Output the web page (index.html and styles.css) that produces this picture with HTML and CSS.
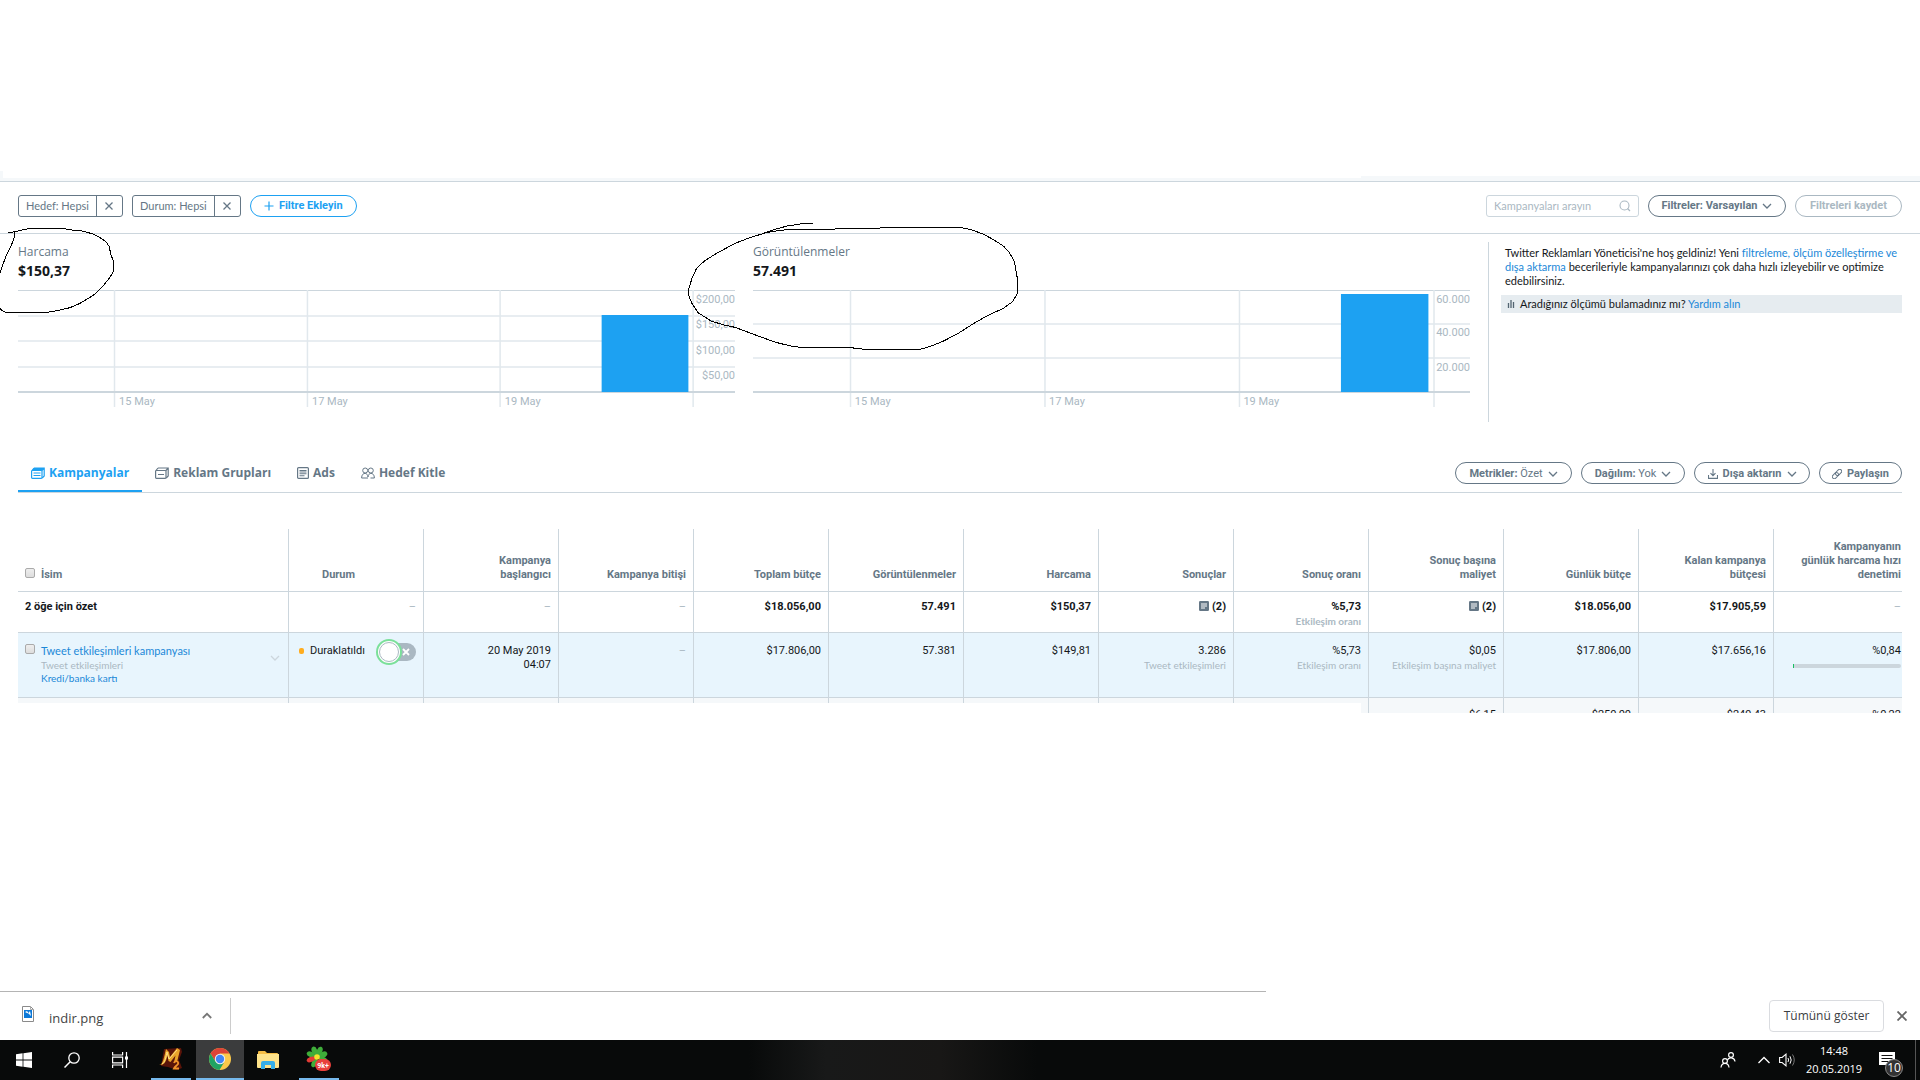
FILE: index.html
```html
<!DOCTYPE html>
<html lang="tr">
<head>
<meta charset="utf-8">
<title>Twitter Reklamları Yöneticisi</title>
<link rel="stylesheet" href="styles.css">
</head>
<body>
<svg class="defs" aria-hidden="true">
  <symbol id="chevron" viewBox="0 0 10 10"><path d="M1 3l4 4 4-4" fill="none" stroke="currentColor" stroke-width="1.3"/></symbol>
  <symbol id="cross" viewBox="0 0 10 10"><path d="M1.5 1.5l7 7M8.500 1.500l-7 7" fill="none" stroke="currentColor" stroke-width="1.300"/></symbol>
  <symbol id="stack" viewBox="0 0 14 12"><path d="M3 1h10.200v8l-2 2M13.200 1l-2.200 2.500M3 1L1 3.500" fill="none" stroke="currentColor" stroke-width="1.200"/><rect x=".6" y="3.500" width="10.400" height="7.800" rx=".8" fill="none" stroke="currentColor" stroke-width="1.200"/></symbol>
  <symbol id="note" viewBox="0 0 10 10"><rect width="10" height="10" rx="1.200" fill="#657786"/><path d="M2 3h6M2 5h6M2 7h4" stroke="#fff" stroke-width="1"/></symbol>
</svg>

<div class="page-top"><span class="top-nub"></span><span class="top-strip"></span></div>

<main>
  <form class="filter-bar">
    <div class="chip"><span class="chip-text">Hedef: Hepsi</span><button type="button" class="chip-x" aria-label="Hedef filtresini kaldır"><svg class="i10"><use href="#cross"/></svg></button></div>
    <div class="chip"><span class="chip-text">Durum: Hepsi</span><button type="button" class="chip-x" aria-label="Durum filtresini kaldır"><svg class="i10"><use href="#cross"/></svg></button></div>
    <button type="button" class="pill pill-add"><svg class="i10" viewBox="0 0 10 10"><path d="M5 .5v9M.5 5h9" stroke="currentColor" stroke-width="1.200"/></svg>Filtre Ekleyin</button>
    <div class="search">
      <input type="text" placeholder="Kampanyaları arayın" aria-label="Kampanyaları arayın">
      <svg class="i12" viewBox="0 0 12 12"><circle cx="5.500" cy="5.500" r="4.500" fill="none" stroke="#aab8c2" stroke-width="1.100"/><path d="M8.500 8.500L11 11" stroke="#aab8c2" stroke-width="1.200"/></svg>
    </div>
    <button type="button" class="pill pill-filters">Filtreler: Varsayılan<svg class="i10"><use href="#chevron"/></svg></button>
    <button type="button" class="pill pill-save" disabled>Filtreleri kaydet</button>
  </form>

  <section class="overview">
    <figure class="chart">
      <figcaption><span class="chart-name">Harcama</span><strong>$150,37</strong></figcaption>
      <svg class="plot" role="img" aria-label="Harcama grafiği">
        <g class="grid"><path class="ln" d="M0 .5h3000"/><path d="M0 26h3000M0 51h3000M0 77h3000"/></g>
        <g class="grid"><line x1="13.460%" x2="13.460%" y2="117"/><line x1="40.370%" x2="40.370%" y2="117"/><line x1="67.240%" x2="67.240%" y2="117"/><line x1="94.160%" x2="94.160%" y2="117"/></g>
        <path class="base" d="M0 102h3000"/>
        <rect class="bar" x="81.400%" y="25" width="12.100%" height="77"/>
        <g class="ylab"><text x="100%" y="13">$200,00</text><text x="100%" y="38">$150,00</text><text x="100%" y="64">$100,00</text><text x="100%" y="89">$50,00</text></g>
        <g class="xlab"><text x="14.100%" y="115">15 May</text><text x="41%" y="115">17 May</text><text x="67.900%" y="115">19 May</text></g>
      </svg>
      <svg class="ink ink-a" viewBox="0 198 345 264" preserveAspectRatio="none" aria-hidden="true"><path d="M25 216L40 216 80 207 120 205 185 205 215 210 245 213 280 222 300 233 318 245 328 260 332 282 341 306 341 332 330 352 310 377 285 402 262 417 240 430 210 443 180 450 148 456 130 458 20 458 8 453 0 445M44 216L42 235 33 258 20 283 10 310 0 338"/></svg>
    </figure>
    <figure class="chart">
      <figcaption><span class="chart-name">Görüntülenmeler</span><strong>57.491</strong></figcaption>
      <svg class="plot" role="img" aria-label="Görüntülenmeler grafiği">
        <g class="grid"><path class="ln" d="M0 .5h3000"/><path d="M0 34h3000M0 68h3000"/></g>
        <g class="grid"><line x1="13.600%" x2="13.600%" y2="117"/><line x1="40.720%" x2="40.720%" y2="117"/><line x1="67.850%" x2="67.850%" y2="117"/><line x1="94.980%" x2="94.980%" y2="117"/></g>
        <path class="base" d="M0 102h3000"/>
        <rect class="bar" x="82%" y="4" width="12.200%" height="98"/>
        <g class="ylab"><text x="100%" y="13">60.000</text><text x="100%" y="46">40.000</text><text x="100%" y="81">20.000</text></g>
        <g class="xlab"><text x="14.200%" y="115">15 May</text><text x="41.300%" y="115">17 May</text><text x="68.400%" y="115">19 May</text></g>
      </svg>
      <svg class="ink ink-b" viewBox="560 186 900 390" preserveAspectRatio="none" aria-hidden="true"><path d="M900 190L870 190 862 193 835 197 800 207 765 221 730 233 690 250 640 280 608 302 586 325 575 350 565 385 564 405 573 430 590 458 625 483 660 495 690 502 740 523 800 547 840 558 865 562 995 562 1040 568 1190 568 1215 560 1250 545 1290 522 1340 487 1370 468 1415 445 1440 425 1453 400 1452 350 1445 305 1430 275 1415 258 1390 240 1360 222 1325 208 1298 202 1125 203 920 208 830 209 800 213 762 220"/></svg>
    </figure>
    <aside class="welcome">
      <p>Twitter Reklamları Yöneticisi'ne hoş geldiniz! Yeni <a href="#">filtreleme, ölçüm özelleştirme ve dışa aktarma</a> becerileriyle kampanyalarınızı çok daha hızlı izleyebilir ve optimize edebilirsiniz.</p>
      <div class="help"><svg class="i8" viewBox="0 0 8 10"><path d="M1.500 4v5M4 1v8M6.500 3v6" stroke="#536471" stroke-width="1.300"/></svg><span>Aradığınız ölçümü bulamadınız mı? <a href="#">Yardım alın</a></span></div>
    </aside>
  </section>

  <div class="tab-row">
    <nav class="tabs">
      <a class="tab active" href="#"><svg class="i14" viewBox="0 0 14 12"><use href="#stack"/><path d="M3 1h10l-2 2.500H1z" fill="currentColor"/><path d="M2.500 6h7M2.500 8.500h7" stroke="currentColor"/></svg>Kampanyalar</a>
      <a class="tab" href="#"><svg class="i14" viewBox="0 0 14 12"><use href="#stack"/><path d="M3 7.500h6" stroke="currentColor"/></svg>Reklam Grupları</a>
      <a class="tab" href="#"><svg class="i12" viewBox="0 0 12 12"><rect x=".6" y=".6" width="10.800" height="10.800" rx="1" fill="none" stroke="currentColor" stroke-width="1.200"/><path d="M2.500 3.500h7M2.500 5h7M2.500 6.700h7M2.500 8.700h5" stroke="currentColor" stroke-width="1.100"/></svg>Ads</a>
      <a class="tab" href="#"><svg class="i14" viewBox="0 0 14 12"><g fill="none" stroke="currentColor" stroke-width="1"><circle cx="4.200" cy="3.500" r="2.500"/><circle cx="9.800" cy="3.500" r="2.500"/><path d="M.6 11c0-6 6.200-6 6.400-1 .2-5 6.400-5 6.400 1H9.500M.6 11H7"/></g></svg>Hedef Kitle</a>
    </nav>
    <div class="actions">
      <button type="button" class="pill w-met"><span>Metrikler: <span class="light">Özet</span></span><svg class="i10"><use href="#chevron"/></svg></button>
      <button type="button" class="pill w-dag"><span>Dağılım: <span class="light">Yok</span></span><svg class="i10"><use href="#chevron"/></svg></button>
      <button type="button" class="pill w-exp"><svg class="i10" viewBox="0 0 10 10"><path d="M5 0v6.500M2.500 4.200L5 6.700l2.500-2.500M.5 6v3.400h9V6" fill="none" stroke="currentColor" stroke-width="1.100"/></svg>Dışa aktarın<svg class="i10"><use href="#chevron"/></svg></button>
      <button type="button" class="pill w-share"><svg class="i10" viewBox="0 0 10 10"><g fill="none" stroke="currentColor" stroke-width="1" transform="rotate(-45 5 5)"><rect x="-.8" y="3" width="7" height="4" rx="2"/><rect x="3.800" y="3" width="7" height="4" rx="2"/></g></svg>Paylaşın</button>
    </div>
  </div>

  <div class="table-wrap">
  <table>
    <colgroup><col><col class="c" span="11"><col class="c-last"></colgroup>
    <thead>
      <tr><th class="name"><label class="check"><input type="checkbox">İsim</label></th><th class="mid">Durum</th><th>Kampanya<br>başlangıcı</th><th>Kampanya bitişi</th><th>Toplam bütçe</th><th>Görüntülenmeler</th><th>Harcama</th><th>Sonuçlar</th><th>Sonuç oranı</th><th>Sonuç başına<br>maliyet</th><th>Günlük bütçe</th><th>Kalan kampanya<br>bütçesi</th><th>Kampanyanın<br>günlük harcama hızı<br>denetimi</th></tr>
    </thead>
    <tbody>
      <tr class="sum"><td class="name">2 öğe için özet</td><td class="none">–</td><td class="none">–</td><td class="none">–</td><td>$18.056,00</td><td>57.491</td><td>$150,37</td><td><svg class="i10"><use href="#note"/></svg> (2)</td><td>%5,73<small>Etkileşim oranı</small></td><td><svg class="i10"><use href="#note"/></svg> (2)</td><td>$18.056,00</td><td>$17.905,59</td><td class="none">–</td></tr>
      <tr class="sel">
        <td class="name"><div class="campaign"><input type="checkbox" aria-label="Tweet etkileşimleri kampanyası"><div class="campaign-text"><a href="#">Tweet etkileşimleri kampanyası</a><small>Tweet etkileşimleri</small><a class="pay" href="#">Kredi/banka kartı</a></div><svg class="i10 more"><use href="#chevron"/></svg></div></td>
        <td class="status"><div class="status-in"><i class="dot"></i>Duraklatıldı<button type="button" class="toggle" aria-label="Kampanyayı etkinleştir"><span class="knob"></span><svg class="i8" viewBox="0 0 8 8"><path d="M1 1l6 6M7 1L1 7" stroke="#fff" stroke-width="1.800"/></svg></button></div></td>
        <td>20 May 2019<br>04:07</td><td class="none">–</td><td>$17.806,00</td><td>57.381</td><td>$149,81</td><td>3.286<small>Tweet etkileşimleri</small></td><td>%5,73<small>Etkileşim oranı</small></td><td>$0,05<small>Etkileşim başına maliyet</small></td><td>$17.806,00</td><td>$17.656,16</td><td>%0,84<div class="pace"><i></i></div></td>
      </tr>
      <tr class="cut"><td></td><td></td><td></td><td></td><td></td><td></td><td></td><td></td><td></td><td><div>$6,15</div></td><td><div>$250,00</div></td><td><div>$249,43</div></td><td><div>%0,22</div></td></tr>
    </tbody>
  </table>
  <span class="table-cover"></span>
  </div>
</main>

<footer>
  <div class="shelf">
    <span class="shelf-line"></span>
    <div class="file"><svg class="doc" viewBox="0 0 12 16"><path d="M.5.500h8l3 3v12H.5z" fill="#fff" stroke="#8a8a8a"/><path d="M8.500.500v3h3" fill="none" stroke="#aaa"/><path d="M2 4h8v8H2z" fill="#0b78d8"/><path d="M3 6l2-1 1.500 2L8 5l1 5-1.500-1.500L6.500 7.500 5 7z" fill="#fff"/></svg><span>indir.png</span><button type="button" class="plain up" aria-label="Seçenekler"><svg class="i10" viewBox="0 0 10 10"><path d="M.8 7L5 2.800 9.200 7" fill="none" stroke="#777" stroke-width="1.800"/></svg></button></div>
    <button type="button" class="show-all">Tümünü göster</button>
    <button type="button" class="plain shut" aria-label="Kapat"><svg class="i10" viewBox="0 0 10 10"><path d="M.5.500l9 9M9.500.500l-9 9" stroke="#666" stroke-width="1.800"/></svg></button>
  </div>
  <div class="taskbar">
    <button type="button" class="task" aria-label="Başlat"><svg width="16" height="16" viewBox="0 0 16 16"><path d="M0 2.200L6.600 1.300v6.200H0zM7.400 1.200L16 0v7.500H7.400zM0 8.400h6.600v6.300L0 13.800zM7.400 8.400H16V16l-8.600-1.200z" fill="#fff"/></svg></button>
    <button type="button" class="task" aria-label="Ara"><svg width="16" height="16" viewBox="0 0 16 16"><circle cx="10" cy="6" r="5.200" fill="none" stroke="#fff" stroke-width="1.300"/><path d="M6.200 9.800L.5 15.500" stroke="#fff" stroke-width="1.500"/></svg></button>
    <button type="button" class="task" aria-label="Görev görünümü"><svg width="16" height="16" viewBox="0 0 16 16"><path d="M.6 0v3h10V0M.6 16v-3h10v3M.6 5.200h10v5.600H.6zM14.500 0v16" fill="none" stroke="#fff" stroke-width="1.200"/><path d="M13 4.500h3v3h-3z" fill="#fff"/></svg></button>
    <button type="button" class="task run" aria-label="Metin2"><svg width="26" height="24" viewBox="0 0 26 24"><path d="M6 2l17-1 1 4-3 8 3 8-5 2-9-3-7-1z" fill="#5a1409"/><path d="M1 18c4 0 5-8 7-16l3 3 1 5 7-9 3 2-3 12-3 .5 1.500-7-5 6.500-2-1-1-6c-1 6-3 10-7.500 10z" fill="#e8a32a"/><path d="M4 17c3-1 4-8 5-12l2 7 8-9" fill="none" stroke="#ffe38a"/><path d="M16 16c1-3 5-2 4 1-1 1.500-3 2.500-4 4.500h5" fill="none" stroke="#f0922a" stroke-width="1.800"/></svg></button>
    <button type="button" class="task run open" aria-label="Chrome"><svg width="22" height="22" viewBox="0 0 22 22"><circle cx="11" cy="11" r="11" fill="#fbc94a"/><path d="M11 5.500h9.500A11 11 0 0 0 1.500 5.500l5 8z" fill="#dc4437"/><path d="M1.500 5.500A11 11 0 0 0 10.500 22l4.500-7.500-8.500-1z" fill="#1fa463"/><circle cx="11" cy="11" r="5.200" fill="#f1f1f1"/><circle cx="11" cy="11" r="4.200" fill="#4285f4"/></svg></button>
    <button type="button" class="task" aria-label="Dosya Gezgini"><svg width="22" height="18" viewBox="0 0 22 18"><path d="M1 1q0-1 1-1h6l2 2h10q1 0 1 1v14H1z" fill="#f5bd45"/><path d="M0 3h22v13q0 1-1 1H1q-1 0-1-1z" fill="#fde28a"/><path d="M4 18v-6q0-2 2-2h10q2 0 2 2v6h-4v-4H8v4z" fill="#35aee8"/></svg></button>
    <button type="button" class="task run" aria-label="ICQ"><svg width="26" height="26" viewBox="0 0 26 26"><g fill="#3fae3a"><ellipse cx="11" cy="4.500" rx="2.800" ry="4.500" transform="rotate(-22 11 11)"/><ellipse cx="11" cy="4.500" rx="2.800" ry="4.500" transform="rotate(23 11 11)"/><ellipse cx="11" cy="4.500" rx="2.800" ry="4.500" transform="rotate(68 11 11)"/><ellipse cx="11" cy="4.500" rx="2.800" ry="4.500" transform="rotate(113 11 11)"/><ellipse cx="11" cy="4.500" rx="2.800" ry="4.500" transform="rotate(203 11 11)"/><ellipse cx="11" cy="4.500" rx="2.800" ry="4.500" transform="rotate(293 11 11)"/></g><ellipse cx="11" cy="4.500" rx="2.500" ry="4.500" fill="#e23b35" transform="rotate(248 11 11)"/><circle cx="11" cy="11" r="2.800" fill="#f8e32c"/><rect x="9" y="13" width="16" height="12" rx="6" fill="#e8403c"/><text x="17" y="22" text-anchor="middle" class="badge9">9k+</text></svg></button>
    <div class="tray">
      <svg width="16" height="16" viewBox="0 0 16 16"><g fill="none" stroke="#fff" stroke-width="1.200"><circle cx="11" cy="3" r="2.400"/><circle cx="5" cy="9" r="2.400"/><path d="M7.500 8c1-3 7-3 7.500 1.500M1 15.500c.5-5.500 7.500-5.500 8 0"/></g></svg>
      <svg class="t-up" width="12" height="8" viewBox="0 0 12 8"><path d="M.5 7L6 1.500 11.500 7" fill="none" stroke="#fff" stroke-width="1.300"/></svg>
      <svg width="17" height="14" viewBox="0 0 17 14"><path d="M.6 4.500h2.500L7 1.200v11.600L3.100 9.500H.6z" fill="none" stroke="#fff" stroke-width="1.100"/><path d="M9 5q1.200 2 0 4M11 3.300q2.400 3.700 0 7.400" fill="none" stroke="#fff"/><path d="M13.500 1.500q3.500 5.500 0 11" fill="none" stroke="#777"/></svg>
      <time>14:48<br>20.05.2019</time>
      <div class="notif"><svg width="16" height="16" viewBox="0 0 16 16"><path d="M0 0h16v13h-5l-3 3v-3H0z" fill="#fff"/><path d="M2.500 3.500h11M2.500 6.500h11M2.500 9.500h7" stroke="#111"/></svg><span>10</span></div>
    </div>
  </div>
</footer>
</body>
</html>
```
FILE: styles.css
```css
* { box-sizing: border-box; }
body { margin: 0; min-height: 100vh; display: flex; flex-direction: column; background: #fff; color: #14171a; font: 11px/14px Roboto, "Open Sans", sans-serif; }
main { flex: 1; }
button, input { font: inherit; color: inherit; margin: 0; }
a { color: #1b88d8; text-decoration: none; }
.defs { position: absolute; width: 0; height: 0; }
.i8 { width: 8px; height: 10px; }
.i10 { width: 10px; height: 10px; }
.i12 { width: 12px; height: 12px; }
.i14 { width: 14px; height: 12px; }
svg { flex: none; }

.page-top { position: relative; height: 181px; border-bottom: 3px solid #f5f8fa; }
.top-nub { position: absolute; left: 0; bottom: 0; width: 3px; height: 7px; background: #f5f8fa; }
.top-strip { position: absolute; left: 1361px; right: 0; bottom: 0; height: 2px; background: #f5f8fa; }

.filter-bar { display: flex; align-items: center; gap: 9px; height: 53px; padding: 0 18px 4px; border: solid #ccd6dd; border-width: 1px 0; color: #657786; }
.chip { display: flex; height: 22px; border: 1px solid #657786; border-radius: 3px; line-height: 20px; }
.chip-text { padding: 0 7px; }
.chip-x { display: flex; align-items: center; justify-content: center; width: 26px; padding: 0; border: 0; border-left: 1px solid #657786; background: none; }
.pill { display: flex; align-items: center; justify-content: center; gap: 5px; height: 22px; padding: 1px 0 0; border: 1px solid #657786; border-radius: 11px; background: #fff; color: #657786; font-weight: 700; white-space: nowrap; }
.pill-add { width: 107px; border-color: #1da1f2; color: #1da1f2; }
.pill-filters { width: 138px; }
.pill-save { width: 107px; border-color: #aab8c2; color: #aab8c2; }
.light { font-weight: 400; }
.w-met { width: 117px; }
.w-dag { width: 104px; }
.w-exp { width: 116px; }
.w-share { width: 83px; }
.search { display: flex; align-items: center; width: 153px; height: 22px; margin-left: auto; padding: 0 7px; border: 1px solid #ccd6dd; border-radius: 3px; }
.search input { flex: 1; min-width: 0; padding: 0; border: 0; outline: 0; background: none; }
.search input::placeholder { color: #aab8c2; }
.chip, .search, .welcome, .campaign, small { font-family: Lato, "Open Sans", sans-serif; }

.overview { display: grid; grid-template-columns: 1fr 1fr 414px; gap: 18px; padding: 8px 18px 0; }
.chart { position: relative; margin: 0; }
figcaption { display: flex; flex-direction: column; height: 48px; font: 12px/20px "Open Sans", sans-serif; }
.chart-name { color: #657786; }
figcaption strong { font-size: 14px; line-height: 18px; }
.plot { display: block; width: 100%; height: 118px; font-size: 11px; overflow: hidden; }
.grid { fill: none; stroke: #e1e8ed; stroke-width: 1.5; }
.ln { stroke: #ccd6dd; stroke-width: 1; }
.base { stroke: #ccd6dd; stroke-width: 2; }
.bar { fill: #1da1f2; }
.ylab, .xlab { fill: #aab8c2; }
.ylab { text-anchor: end; }
.ink { position: absolute; z-index: 2; overflow: visible; pointer-events: none; fill: none; stroke: #000; stroke-width: 1; shape-rendering: crispEdges; }
.ink path { vector-effect: non-scaling-stroke; }
.ink-a { left: -18px; top: -16px; width: 115px; height: 88px; }
.ink-b { left: -66px; top: -20px; width: 333px; height: 130px; }
.welcome { height: 180px; padding: 4px 0 0 12px; border-left: 1px solid #ccd6dd; }
.welcome p { margin: 0 0 7px; padding: 0 4px; }
.help { display: flex; align-items: center; gap: 5px; height: 18px; padding: 0 6px; background: #e6ecf0; }

.tab-row { display: flex; justify-content: space-between; margin: 31px 18px 0; height: 40px; border-bottom: 1px solid #ccd6dd; }
.tabs { display: flex; }
.tab { display: flex; align-items: center; gap: 4px; padding: 0 13px; color: #657786; font: 700 12px/16px "Open Sans", sans-serif; }
.tab.active { color: #1da1f2; border-bottom: 2px solid #1da1f2; padding-top: 2px; }
.actions { display: flex; gap: 9px; padding-top: 9px; }

.table-wrap { position: relative; margin: 36px 18px 0; overflow: hidden; }
table { width: 100%; table-layout: fixed; border-collapse: separate; border-spacing: 0; }
.c { width: 135px; }
.c-last { width: 128px; }
th, td { padding: 0 7px; border-right: 1px solid #ccd6dd; border-bottom: 1px solid #ccd6dd; text-align: right; vertical-align: top; }
th:last-child, td:last-child { border-right: 0; padding-right: 1px; }
th { height: 63px; padding-bottom: 9px; vertical-align: bottom; color: #657786; font-weight: 700; }
th.name, td.name { text-align: left; }
th.mid { text-align: center; padding-right: 42px; padding-left: 7px; }
.check { display: flex; align-items: center; gap: 6px; }
input[type="checkbox"] { appearance: none; width: 10px; height: 10px; border: 1px solid #aaa; border-radius: 2px; background: linear-gradient(#eee, #ddd); }
.check input { margin-bottom: 4px; }
.sum td { height: 41px; padding-top: 8px; font-weight: 700; }
.sel td { height: 65px; padding-top: 11px; background: #e8f5fd; }
td.none { color: #aab8c2; font-weight: 400; }
small { display: block; color: #aab8c2; font-size: 10px; line-height: 14px; white-space: nowrap; }
td .i10 { vertical-align: -1px; }
.campaign { display: flex; gap: 6px; }
.campaign-text { flex: 1; }
.campaign-text a { display: block; }
.campaign-text .pay { font-size: 10px; line-height: 13px; }
.more { color: #ccd6dd; margin: 9px 1px 0; }
.status-in { display: flex; align-items: center; margin-left: 3px; height: 14px; }
.dot { width: 5px; height: 6px; margin-right: 6px; border-radius: 2px; background: #ffad1f; }
.toggle { position: relative; display: flex; align-items: center; justify-content: flex-end; width: 35px; height: 18px; margin: 2px 0 0 auto; padding: 0 6px; border: 0; border-radius: 9px; background: #aab8c2; }
.knob { position: absolute; left: -2px; top: -1px; width: 20px; height: 20px; border: 1px solid #aab8c2; border-radius: 50%; background: #fff; box-shadow: 0 0 0 1px #fff, 0 0 0 3px #7be09a; }
.pace { width: 108px; height: 4px; margin: 6px 0 0 auto; border-radius: 2px; background: #ccd6dd; }
.pace i { display: block; width: 1px; height: 4px; background: #17bf63; }
.cut td { height: 15px; border-bottom: 0; background: #f5f8fa; }
.cut div { height: 15px; padding-top: 10px; overflow: hidden; }
.table-cover { position: absolute; left: 0; right: 541px; bottom: 0; height: 10px; background: #fff; }

.shelf { position: relative; display: flex; align-items: center; height: 49px; padding: 0 7px 0 0; background: #fff; font-family: "Open Sans", sans-serif; }
.shelf-line { position: absolute; left: 0; right: 654px; top: 0; height: 1px; background: #b4b4b4; }
.file { display: flex; align-items: center; width: 231px; height: 36px; margin-top: 1px; padding: 0 18px 0 22px; border-right: 1px solid #ccc; color: #444; font-size: 13px; }
.file span { margin: 4px 0 0 15px; }
.doc { width: 12px; height: 16px; margin-top: -4px; }
.plain { display: flex; padding: 0; border: 0; background: none; }
.up { margin-left: auto; }
.show-all { width: 115px; height: 32px; margin-left: auto; padding: 0; border: 1px solid #dadce0; border-radius: 4px; background: #fff; color: #3c4043; font-size: 12px; }
.shut { margin: 0 6px 0 13px; }
.taskbar { display: flex; height: 40px; background: #080a0a linear-gradient(90deg, #080a0a 39%, #181919 43%, #181716 49%, #080a0a 54%); color: #fff; }
.task { display: flex; align-items: center; justify-content: center; width: 48px; padding: 0; border: 0; background: none; }
.run { border-bottom: 2px solid #76b9ed; width: 40px; margin: 0 5px 0 7px; }
.open { width: 48px; margin: 0; background: #3b3c3d; }
.badge9 { fill: #fff; font-size: 7px; font-weight: 700; }
.tray { display: flex; align-items: center; margin-left: auto; margin-right: 4px; padding-right: 4px; border-right: 1px solid #555; font-family: "Open Sans", sans-serif; }
.t-up { margin: 0 9px 0 22px; }
.tray time { width: 64px; margin: 0 13px 0 6px; font-size: 11px; line-height: 18px; text-align: center; }
.notif { position: relative; height: 16px; width: 32px; }
.notif span { position: absolute; left: 6px; top: 7px; width: 18px; height: 18px; border: 1px solid #888; border-radius: 50%; background: #333; font-size: 12px; line-height: 16px; text-align: center; }
```
